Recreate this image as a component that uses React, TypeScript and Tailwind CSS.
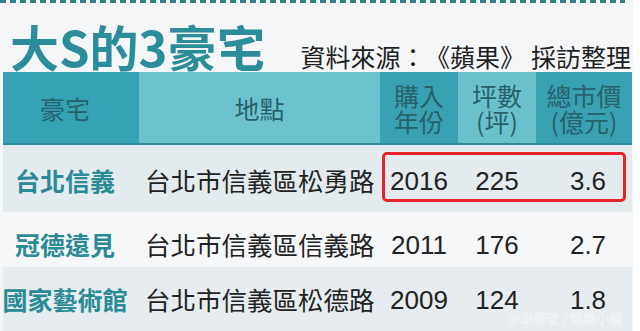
import React from "react";

const rows = [
  { name: "台北信義", addr: "台北市信義區松勇路", year: "2016", ping: "225", price: "3.6", bg: "bg-[#e4ebee]", h: "h-[67px]" },
  { name: "冠德遠見", addr: "台北市信義區信義路", year: "2011", ping: "176", price: "2.7", bg: "bg-[#f5f7f8]", h: "h-[55px]" },
  { name: "國家藝術館", addr: "台北市信義區松德路", year: "2009", ping: "124", price: "1.8", bg: "bg-[#e6ecef]", h: "h-[78px]" },
];

export default function App() {
  return (
    <div className="w-[640px] h-[331px] overflow-hidden flex bg-white font-['Noto_Sans_CJK_TC','Noto_Sans_CJK_SC',sans-serif]">
      <div className="w-[633px] h-full bg-[#f4f6f7] flex flex-col relative">
        <div className="shrink-0 h-[3px] w-[625px] bg-[repeating-linear-gradient(90deg,#2f7f88_0px,#2f7f88_6px,transparent_6px,transparent_10px)]" />
        <div className="shrink-0 h-[69px] flex items-baseline pl-[10px] pt-[18px] whitespace-nowrap">
          <span className="text-[49px] leading-[1] font-bold text-[#2b8c9a]">大S的3豪宅</span>
          <span className="ml-[35px] text-[25px] leading-[1] text-[#1f1f1f]">資料來源：<span className="ml-[12px]">《蘋果》</span><span className="ml-[6px]">採訪整理</span></span>
        </div>
        <div className="shrink-0 ml-[3px] w-[629px] flex flex-col">
          <div className="shrink-0 h-[73px] flex text-[25px] leading-[26px] text-[#27616a] border-b-2 border-[#2f8c9c]">
            <div className="w-[136px] bg-[#35a2b5] flex items-center justify-center pr-[12px]">豪宅</div>
            <div className="w-[241px] bg-[#6dc3cd] flex items-center justify-center">地點</div>
            <div className="w-[78px] bg-[#3aa1b2] flex flex-col items-center justify-center"><span>購入</span><span>年份</span></div>
            <div className="w-[78px] bg-[#6ac1cc] flex flex-col items-center justify-center"><span>坪數</span><span>(坪)</span></div>
            <div className="w-[96px] bg-[#3aa1b3] flex flex-col items-center justify-center"><span>總市價</span><span>(億元)</span></div>
          </div>
          {rows.map((r, i) => (
            <div key={i} className={`shrink-0 relative flex items-start ${r.bg} ${r.h}`}>
              <div className={`w-[136px] flex justify-center pr-[12px] whitespace-nowrap text-[25px] leading-[26px] font-bold text-[#2a8a96] ${i === 0 ? "pt-[22px]" : "pt-[19px]"}`}>{r.name}</div>
              <div className={`w-[241px] pl-[6px] whitespace-nowrap text-[25.5px] leading-[26px] text-[#222] ${i === 0 ? "pt-[22px]" : "pt-[19px]"}`}>{r.addr}</div>
              <div className={`w-[78px] flex justify-center text-[26px] leading-[26px] text-[#222] font-['Liberation_Sans',sans-serif] ${i === 0 ? "pt-[23px]" : "pt-[20px]"}`}>{r.year}</div>
              <div className={`w-[78px] flex justify-center text-[26px] leading-[26px] text-[#222] font-['Liberation_Sans',sans-serif] ${i === 0 ? "pt-[23px]" : "pt-[20px]"}`}>{r.ping}</div>
              <div className={`w-[96px] flex justify-center pl-[8px] text-[26px] leading-[26px] text-[#222] font-['Liberation_Sans',sans-serif] ${i === 0 ? "pt-[23px]" : "pt-[20px]"}`}>{r.price}</div>
              {i === 0 && (
                <div className="absolute left-[379px] top-[7px] w-[244px] h-[50px] border-[3px] border-[#e8222a] rounded-[5px]" />
              )}
              {i === 2 && (
                <div className="absolute left-[505px] top-[44px] text-[13px] leading-[14px] text-white/60 whitespace-nowrap">@頭條號 / 娛樂小編</div>
              )}
            </div>
          ))}
        </div>
      </div>
      <div className="w-[7px] h-full bg-white" />
    </div>
  );
}
